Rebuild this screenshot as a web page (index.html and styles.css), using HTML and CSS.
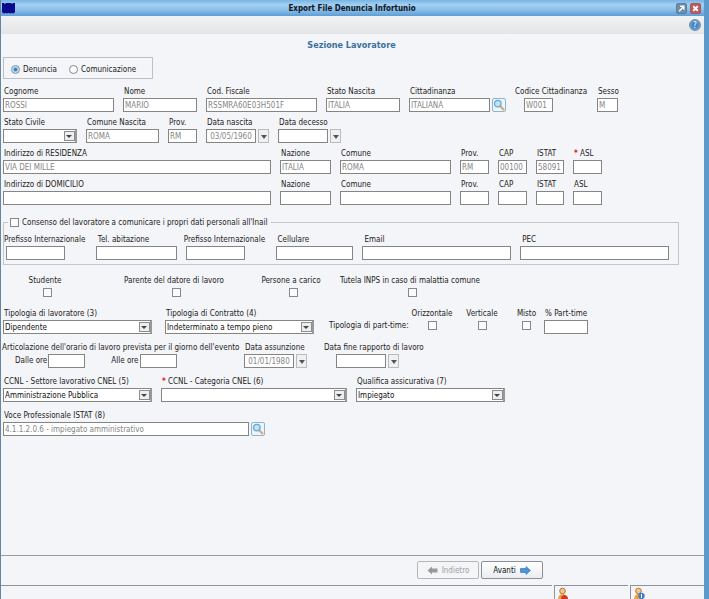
FILE: index.html
```html
<!DOCTYPE html>
<html lang="it">
<head>
  <meta charset="UTF-8">
  <meta name="viewport" content="width=device-width, initial-scale=1.0">
  <title>Export File Denuncia Infortunio</title>
  <link rel="stylesheet" href="styles.css">
</head>
<body>
  <header class="titlebar">
    <svg class="app-icon" viewBox="0 0 13 12"><path d="M0 1h2l1 1 1-1h5l1 1 1-1h2v9l-1 1H1l-1-1z" fill="#0a0a8c"/><path d="M1 11.500h11" stroke="#5a6cc0" stroke-dasharray="2 1"/></svg>
    <h1>Export File Denuncia Infortunio</h1>
    <button class="win-button expand" type="button" aria-label="Ingrandisci"><svg viewBox="0 0 10 10"><path d="M2.500 8L7 3M3.500 2.500H7.500V6.500" fill="none" stroke="#fff" stroke-width="1.600"/></svg></button>
    <button class="win-button close" type="button" aria-label="Chiudi"><svg viewBox="0 0 10 10"><path d="M2.500 2.500l5 5M7.500 2.500l-5 5" stroke="#fff" stroke-width="2"/></svg></button>
  </header>
  <div class="toolbar">
    <button class="help" type="button" aria-label="Aiuto">?</button>
  </div>

  <main>
    <h2>Sezione Lavoratore</h2>
    <div class="kind">
      <label><input type="radio" name="tipo" checked> Denuncia</label>
      <label><input type="radio" name="tipo"> Comunicazione</label>
    </div>

    <!-- dati anagrafici -->
    <div class="row person">
      <div class="field"><label for="cognome">Cognome</label><input type="text" id="cognome" value="ROSSI" disabled></div>
      <div class="field"><label for="nome">Nome</label><input type="text" id="nome" value="MARIO" disabled></div>
      <div class="field"><label for="cf">Cod. Fiscale</label><input type="text" id="cf" value="RSSMRA60E03H501F" disabled></div>
      <div class="field"><label for="stato-nascita">Stato Nascita</label><input type="text" id="stato-nascita" value="ITALIA" disabled></div>
      <div class="field">
        <label for="cittadinanza">Cittadinanza</label>
        <div class="lookup">
          <input type="text" id="cittadinanza" value="ITALIANA" disabled>
          <button type="button" aria-label="Cerca cittadinanza"><svg viewBox="0 0 12 12"><path d="M7 7l4 4" stroke="#e8a36a" stroke-width="2.200"/><circle cx="4.800" cy="4.600" r="3.300" fill="#bfe3f7" stroke="#6aa9d4" stroke-width="1.300"/></svg></button>
        </div>
      </div>
      <div class="field code"><label for="cod-citt">Codice Cittadinanza</label><input type="text" id="cod-citt" class="short" value="W001" disabled></div>
      <div class="field"><label for="sesso">Sesso</label><input type="text" id="sesso" class="tiny" value="M" disabled></div>
    </div>
    <div class="row birth">
      <div class="field"><label for="stato-civile">Stato Civile</label><div class="select"><select id="stato-civile"><option></option></select></div></div>
      <div class="field"><label for="comune-nascita">Comune Nascita</label><input type="text" id="comune-nascita" value="ROMA" disabled></div>
      <div class="field"><label for="prov-nascita">Prov.</label><input type="text" id="prov-nascita" value="RM" disabled></div>
      <div class="field"><label for="data-nascita">Data nascita</label><div class="date"><input type="text" id="data-nascita" value="03/05/1960" disabled><button type="button" aria-label="Calendario"></button></div></div>
      <div class="field"><label for="data-decesso">Data decesso</label><div class="date"><input type="text" id="data-decesso"><button type="button" aria-label="Calendario"></button></div></div>
    </div>

    <!-- indirizzi -->
    <div class="row address">
      <div class="field"><label for="res">Indirizzo di RESIDENZA</label><input type="text" id="res" value="VIA DEI MILLE" disabled></div>
      <div class="field"><label for="res-naz">Nazione</label><input type="text" id="res-naz" value="ITALIA" disabled></div>
      <div class="field"><label for="res-com">Comune</label><input type="text" id="res-com" value="ROMA" disabled></div>
      <div class="field"><label for="res-prov">Prov.</label><input type="text" id="res-prov" value="RM" disabled></div>
      <div class="field"><label for="res-cap">CAP</label><input type="text" id="res-cap" value="00100" disabled></div>
      <div class="field"><label for="res-istat">ISTAT</label><input type="text" id="res-istat" value="58091" disabled></div>
      <div class="field"><label for="res-asl"><b>*</b> ASL</label><input type="text" id="res-asl" class="short"></div>
    </div>
    <div class="row address">
      <div class="field"><label for="dom">Indirizzo di DOMICILIO</label><input type="text" id="dom"></div>
      <div class="field"><label for="dom-naz">Nazione</label><input type="text" id="dom-naz"></div>
      <div class="field"><label for="dom-com">Comune</label><input type="text" id="dom-com"></div>
      <div class="field"><label for="dom-prov">Prov.</label><input type="text" id="dom-prov"></div>
      <div class="field"><label for="dom-cap">CAP</label><input type="text" id="dom-cap"></div>
      <div class="field"><label for="dom-istat">ISTAT</label><input type="text" id="dom-istat"></div>
      <div class="field"><label for="dom-asl">ASL</label><input type="text" id="dom-asl" class="short"></div>
    </div>

    <fieldset class="contacts">
      <legend><label><input type="checkbox"> Consenso del lavoratore a comunicare i propri dati personali all'Inail</label></legend>
      <div class="row contact">
        <div class="field wide-label"><label for="pref-tel">Prefisso Internazionale</label><input type="text" id="pref-tel"></div>
        <div class="field"><label for="tel">Tel. abitazione</label><input type="text" id="tel"></div>
        <div class="field wide-label"><label for="pref-cell">Prefisso Internazionale</label><input type="text" id="pref-cell"></div>
        <div class="field"><label for="cell">Cellulare</label><input type="text" id="cell"></div>
        <div class="field"><label for="email">Email</label><input type="text" id="email"></div>
        <div class="field"><label for="pec">PEC</label><input type="text" id="pec"></div>
      </div>
    </fieldset>

    <div class="row flags">
      <label class="tick">Studente<input type="checkbox"></label>
      <label class="tick">Parente del datore di lavoro<input type="checkbox"></label>
      <label class="tick">Persone a carico<input type="checkbox"></label>
      <label class="tick">Tutela INPS in caso di malattia comune<input type="checkbox"></label>
    </div>

    <!-- contratto -->
    <div class="row contract">
      <div class="field"><label for="tipo-lav">Tipologia di lavoratore (3)</label><div class="select"><select id="tipo-lav"><option>Dipendente</option></select></div></div>
      <div class="field"><label for="tipo-contr">Tipologia di Contratto (4)</label><div class="select"><select id="tipo-contr"><option>Indeterminato a tempo pieno</option></select></div></div>
      <span class="caption">Tipologia di part-time:</span>
      <label class="tick">Orizzontale<input type="checkbox"></label>
      <label class="tick">Verticale<input type="checkbox"></label>
      <label class="tick">Misto<input type="checkbox"></label>
      <div class="field"><label for="perc">% Part-time</label><input type="text" id="perc" class="medium"></div>
    </div>
    <div class="row hours">
      <div class="schedule">
        <span>Articolazione dell'orario di lavoro prevista per il giorno dell'evento</span>
        <div class="times">
          <label>Dalle ore <input type="text"></label>
          <label>Alle ore <input type="text"></label>
        </div>
      </div>
      <div class="field"><label for="assunzione">Data assunzione</label><div class="date"><input type="text" id="assunzione" value="01/01/1980" disabled><button type="button" aria-label="Calendario"></button></div></div>
      <div class="field end-date"><label for="fine">Data fine rapporto di lavoro</label><div class="date"><input type="text" id="fine"><button type="button" aria-label="Calendario"></button></div></div>
    </div>
    <div class="row ccnl">
      <div class="field"><label for="settore">CCNL - Settore lavorativo CNEL (5)</label><div class="select"><select id="settore"><option>Amministrazione Pubblica</option></select></div></div>
      <div class="field"><label for="categoria"><b>*</b> CCNL - Categoria CNEL (6)</label><div class="select"><select id="categoria"><option></option></select></div></div>
      <div class="field"><label for="qualifica">Qualifica assicurativa (7)</label><div class="select"><select id="qualifica"><option>Impiegato</option></select></div></div>
    </div>
    <div class="row job">
      <div class="field">
        <label for="voce">Voce Professionale ISTAT (8)</label>
        <div class="lookup">
          <input type="text" id="voce" value="4.1.1.2.0.6 - impiegato amministrativo" disabled>
          <button type="button" aria-label="Cerca voce professionale"><svg viewBox="0 0 12 12"><path d="M7 7l4 4" stroke="#e8a36a" stroke-width="2.200"/><circle cx="4.800" cy="4.600" r="3.300" fill="#bfe3f7" stroke="#6aa9d4" stroke-width="1.300"/></svg></button>
        </div>
      </div>
    </div>
  </main>

  <nav class="actions">
    <button type="button" disabled><svg viewBox="0 0 11 9"><path d="M.5 4.500L5 .5V2.500H10.500V6.500H5V8.500z" fill="#999"/></svg>Indietro</button>
    <button type="button">Avanti<svg viewBox="0 0 11 9"><path d="M10.500 4.500L6 .5V2.500H.5V6.500H6V8.500z" fill="#4d94dc" stroke="#2b6cb5" stroke-width=".6"/></svg></button>
  </nav>
  <footer class="status">
    <div></div>
    <div class="cell"><svg viewBox="0 0 12 14"><circle cx="5.500" cy="4" r="2.800" fill="#f4c58e" stroke="#b9772c"/><path d="M1 13c0-4 2-6 4.500-6S10 9 10 13z" fill="#f0a040"/><path d="M4 12c0-3 2-4 3.500-4S11 9 11 12z" fill="#d03a1c"/></svg></div>
    <div class="cell"><svg viewBox="0 0 12 14"><circle cx="5.500" cy="4" r="2.800" fill="#f4c58e" stroke="#b9772c"/><path d="M1 13c0-4 2-6 4.500-6S10 9 10 13z" fill="#f0a040"/><circle cx="8.500" cy="9" r="3.200" fill="#3c7fc8"/><path d="M8.500 7v4" stroke="#fff"/></svg></div>
  </footer>
</body>
</html>
```
FILE: styles.css
```css
* {
  box-sizing: border-box;
}
body {
  margin: 0;
  min-height: 100vh;
  display: flex;
  flex-direction: column;
  border-left: 1px solid #6585a3;
  border-right: 5px solid #5b9acb;
  background: #f4f5f8;
  color: #222;
  font: 8px/13px "DejaVu Sans Condensed", Tahoma, sans-serif;
}
input, select, button {
  margin: 0;
  font: inherit;
  color: inherit;
}
button { padding: 0; }
svg { display: block; }

/* barra del titolo */
.titlebar {
  display: flex;
  align-items: center;
  gap: 3px;
  height: 16px;
  margin-right: -5px;
  padding: 0 8px 0 1px;
  background: linear-gradient(#78b4e4, #a2d0f2 30%, #8cc0ea 60%, #5c9dd6);
}
.titlebar h1 {
  flex: 1;
  margin: 0;
  padding-left: 13px;
  text-align: center;
  font-size: 8px;
  color: #10141c;
}
.app-icon {
  width: 13px;
  height: 12px;
}
.win-button {
  width: 11px;
  height: 11px;
  border: 1px solid #5d7f9c;
  border-radius: 2px;
  background: #6d8ea8;
}
.win-button.close {
  border-color: #a05a62;
  background: #bd5a5c;
}
.toolbar {
  display: flex;
  justify-content: flex-end;
  align-items: center;
  height: 18px;
  padding-right: 3px;
  background: linear-gradient(#f1f2f4, #e4e5e7);
}
.help {
  width: 12px;
  height: 12px;
  border: 1px solid #7690ab;
  border-radius: 50%;
  background: radial-gradient(#3f86c8 30%, #8eb0d0);
  color: #fff;
  line-height: 9px;
}

main {
  flex: 1;
  padding: 5px 0 10px 2px;
}
h2 {
  margin: 0;
  padding-right: 4px;
  text-align: center;
  font-size: 9px;
  color: #3a6f9e;
}
.kind {
  display: flex;
  align-items: center;
  gap: 12px;
  width: 150px;
  height: 22px;
  margin: 5px 0 6px;
  padding: 2px 0 0 7px;
  border: 1px solid #bcc0c4;
}
.kind label,
legend label {
  display: flex;
  align-items: center;
  gap: 3px;
}
input[type="radio"],
input[type="checkbox"] {
  appearance: none;
  flex: none;
  width: 9px;
  height: 9px;
  border: 1px solid #888;
  background: #fafbfc;
}
input[type="radio"] { border-radius: 50%; }
input[type="radio"]:checked {
  border-color: #7c97b0;
  background: radial-gradient(#3f7fb8 25%, #c3dcf0 50%);
}

/* righe e campi */
.row {
  display: grid;
  margin-bottom: 4px;
}
.person { grid-template-columns: 120fr 83fr 120fr 83fr 105fr 83fr 107fr; }
.birth { grid-template-columns: 83fr 82fr 38fr 72fr 426fr; }
.address { grid-template-columns: 277fr 60fr 120fr 38fr 38fr 37fr 131fr; }
.flags { grid-template-columns: 84fr 174fr 60fr 178fr 205fr; }
.contract { grid-template-columns: 162fr 162fr 82fr 46fr 54fr 35fr 160fr; }
.hours { grid-template-columns: 241fr 79fr 381fr; }
.ccnl { grid-template-columns: 158fr 195fr 158fr 190fr; }
.job { grid-template-columns: 271fr 430fr; }
.field {
  display: flex;
  flex-direction: column;
  min-width: 0;
  padding-right: 9px;
}
.field > label {
  height: 13px;
  padding-left: 1px;
  white-space: nowrap;
}
label b {
  color: #d22;
}
input[type="text"],
select {
  width: 100%;
  min-width: 0;
  height: 14px;
  padding: 0 1px;
  border: 1px solid #858585;
  border-radius: 0;
  background: #fff;
}
input:disabled {
  color: #858585;
}
input[type="text"].tiny { width: 21px; }
input[type="text"].short { width: 29px; }
input[type="text"].medium { width: 44px; }
.code { align-items: flex-start; }
.code input { margin-left: 10px; }

.select { position: relative; }
.select select {
  appearance: none;
  display: block;
  border-right: 2px solid #999;
  color: #111;
}
/* pulsante della tendina, sopra la select */
.select::before,
.select::after {
  content: "";
  position: absolute;
  pointer-events: none;
}
.select::before {
  top: 2px;
  right: 2px;
  width: 11px;
  height: 10px;
  box-sizing: border-box;
  border: 1px solid #8d8d8d;
  background: #eceef0;
}
.select::after {
  top: 6px;
  right: 5px;
  border: 3px solid transparent;
  border-top-color: #444;
  border-bottom: 0;
}
.date {
  display: flex;
  gap: 2px;
  width: 63px;
}
.date input { text-align: center; }
.date button {
  flex: none;
  width: 11px;
  height: 14px;
  border: 1px solid #bbb;
  background: #eef0f2;
}
.date button::after {
  content: "";
  display: block;
  margin: 1px auto 0;
  width: 0;
  border: 3px solid transparent;
  border-top: 4px solid #555;
  border-bottom: 0;
}
.lookup {
  display: flex;
  gap: 2px;
}
.lookup button {
  flex: none;
  width: 14px;
  height: 14px;
  border: 1px solid #8fb4cf;
  border-radius: 2px;
  background: #eaf5fc;
}
.person .lookup { margin-right: -1px; }

.contacts {
  min-width: 0;
  margin: 11px 25px 9px 0;
  padding: 4px 0 4px 2px;
  border: 1px solid #c3c6c9;
}
.contacts legend {
  margin-left: 2px;
  padding: 0 4px 0 2px;
}
.contact {
  grid-template-columns: 90fr 90fr 90fr 87fr 158fr 158fr;
  margin: 0;
}
.contact .wide-label { padding-right: 31px; }
.contact .wide-label label { margin-left: -4px; }
.contact label { padding-left: 2px; }

.tick {
  display: flex;
  flex-direction: column;
  align-items: center;
  gap: 1px;
  white-space: nowrap;
}
.flags { margin-bottom: 10px; }
.flags .tick input { margin-left: 4px; }
.contract, .hours, .ccnl { margin-bottom: 7px; }
.contract .field { padding-right: 13px; }
.caption {
  align-self: end;
  padding: 0 0 2px 2px;
  white-space: nowrap;
}
.schedule { white-space: nowrap; }
.schedule > span {
  display: block;
  margin-left: -1px;
}
.times {
  display: flex;
  gap: 26px;
  padding-left: 12px;
}
.times label {
  display: flex;
  gap: 1px;
}
.times input[type="text"] { width: 37px; }
.end-date .date { margin-left: 13px; }

.actions {
  display: flex;
  justify-content: flex-end;
  gap: 2px;
  height: 30px;
  padding: 5px 161px 0 0;
  border-top: 1px solid #9a9da0;
}
.actions button {
  display: flex;
  justify-content: center;
  align-items: center;
  gap: 4px;
  width: 62px;
  height: 18px;
  border: 1px solid #8c8f94;
  border-radius: 2px;
  background: linear-gradient(#fff, #e9edf2);
  color: #111;
}
.actions button:disabled {
  border-color: #b4b6ba;
  background: #f4f5f7;
  color: #a0a0a0;
}
.actions svg {
  width: 11px;
  height: 9px;
}
.status {
  display: grid;
  grid-template-columns: 549fr 74fr 74fr;
  gap: 2px;
  height: 14px;
  overflow: hidden;
}
.status div { border-top: 1px solid #8f9296; }
.status .cell {
  padding: 1px 2px;
  border-left: 1px solid #8f9296;
}
.status svg {
  width: 12px;
  height: 14px;
}
```
